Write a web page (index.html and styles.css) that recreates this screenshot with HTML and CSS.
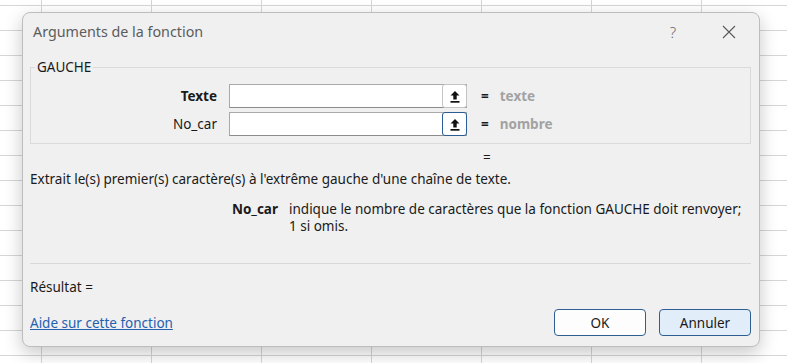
FILE: index.html
```html
<!DOCTYPE html>
<html lang="fr">
<head>
    <meta charset="UTF-8">
    <title>Arguments de la fonction</title>
    <link rel="stylesheet" href="styles.css">
</head>
<body>

<div class="dialog">
    <div class="titlebar">
        <span class="title">Arguments de la fonction</span>
        <span class="help">?</span>
        <span class="close">
            <svg width="14" height="14" viewBox="0 0 14 14"><path d="M1 1L13 13M13 1L1 13" stroke="#5a5a5a" stroke-width="1.1" fill="none"/></svg>
        </span>
    </div>

    <fieldset class="group">
        <legend>GAUCHE</legend>
        <div class="arg-row">
            <label class="arg-name bold">Texte</label>
            <div class="ref-input">
                <span class="ref-btn">
                    <svg width="12" height="13" viewBox="0 0 12 13"><path d="M6 1L1.5 5.5H4.3V9.5H7.7V5.5H10.5Z" fill="#111"/><rect x="1.5" y="11" width="9" height="1.7" fill="#111"/></svg>
                </span>
            </div>
            <span class="eq">=</span>
            <span class="arg-value">texte</span>
        </div>
        <div class="arg-row">
            <label class="arg-name">No_car</label>
            <div class="ref-input">
                <span class="ref-btn focused">
                    <svg width="12" height="13" viewBox="0 0 12 13"><path d="M6 1L1.5 5.5H4.3V9.5H7.7V5.5H10.5Z" fill="#111"/><rect x="1.5" y="11" width="9" height="1.7" fill="#111"/></svg>
                </span>
            </div>
            <span class="eq">=</span>
            <span class="arg-value">nombre</span>
        </div>
    </fieldset>

    <div class="formula-eq">=</div>
    <div class="desc">Extrait le(s) premier(s) caractère(s) à l'extrême gauche d'une chaîne de texte.</div>

    <div class="arg-help">
        <div class="help-name">No_car</div>
        <div class="help-text">
            <div>indique le nombre de caractères que la fonction GAUCHE doit renvoyer;</div>
            <div>1 si omis.</div>
        </div>
    </div>

    <div class="separator"></div>

    <div class="result">Résultat =</div>

    <div class="footer">
        <a href="#" class="help-link">Aide sur cette fonction</a>
        <div class="buttons">
            <button class="btn">OK</button>
            <button class="btn cancel">Annuler</button>
        </div>
    </div>
</div>

</body>
</html>
```

FILE: styles.css
```css
html, body {
    height: 100%;
}
body {
    margin: 0;
    overflow: hidden;
    font-family: "Noto Sans", "Open Sans", sans-serif;
    font-size: 13.5px;
    color: #1a1a1a;
    background-color: #fff;
    background-image:
        linear-gradient(to right, #d6d6d6 1px, transparent 1px),
        linear-gradient(to bottom, #d6d6d6 1px, transparent 1px);
    background-size: 110px 25px;
    background-position: 41px 5px;
}

.dialog {
    box-sizing: border-box;
    width: 738px;
    height: 335px;
    margin: 12px 0 0 22px;
    padding: 0 8px 0 7px;
    background-color: #f0f0f0;
    border: 1px solid #bdbdbd;
    border-radius: 8px;
    box-shadow: 0 6px 18px rgba(0, 0, 0, 0.22);
}

/* title bar */
.titlebar {
    display: flex;
    align-items: center;
    height: 37px;
    padding-left: 3px;
}
.title {
    flex: 1;
    font-size: 14.3px;
    color: #5c5c5c;
}
.help {
    width: 14px;
    margin-right: 42px;
    font-size: 15px;
    font-weight: 300;
    color: #6a6a6a;
    text-align: center;
}
.close {
    display: flex;
    margin-right: 15px;
}

/* argument group */
.group {
    margin: 9px 0 0 0;
    padding: 9px 0 7px 0;
    border: 1px solid #dadada;
}
.group legend {
    padding: 0 2px;
    margin-left: 4px;
    font-size: 13.5px;
    line-height: 16px;
}
.arg-row {
    display: flex;
    align-items: center;
    height: 24px;
}
.arg-row + .arg-row {
    margin-top: 4px;
}
.arg-name {
    width: 186px;
    text-align: right;
    margin-right: 12px;
}
.bold {
    font-weight: bold;
}
.ref-input {
    box-sizing: border-box;
    width: 238px;
    height: 24px;
    display: flex;
    justify-content: flex-end;
    background-color: #fff;
    border: 1px solid #a9a9a9;
    border-bottom-color: #8c8c8c;
}
.ref-btn {
    box-sizing: border-box;
    display: flex;
    align-items: center;
    justify-content: center;
    width: 25px;
    height: 24px;
    margin: -1px -1px 0 0;
    background-color: #fff;
    border: 1px solid #c4c4c4;
    border-radius: 3px;
}
.ref-btn.focused {
    border-color: #2a5d93;
}
.eq {
    margin-left: 14px;
    font-weight: bold;
}
.arg-value {
    margin-left: 11px;
    font-weight: bold;
    color: #a2a2a2;
}

/* description */
.formula-eq {
    margin: 4px 0 0 453px;
    line-height: 18px;
}
.desc {
    margin-top: 4px;
    line-height: 18px;
}
.arg-help {
    display: flex;
    margin-top: 13px;
    line-height: 17px;
}
.help-name {
    width: 248px;
    text-align: right;
    font-weight: bold;
    margin-right: 11px;
}
.help-text {
    display: flex;
    flex-direction: column;
}
.separator {
    height: 1px;
    margin-top: 28px;
    background-color: #d9d9d9;
}
.result {
    margin-top: 14px;
    line-height: 18px;
}

/* footer */
.footer {
    display: flex;
    align-items: center;
    justify-content: space-between;
    margin-top: 13px;
}
.help-link {
    color: #2461b0;
    text-decoration: underline;
}
.buttons {
    display: flex;
    gap: 13px;
}
.btn {
    box-sizing: border-box;
    width: 92px;
    height: 27px;
    font-family: "Noto Sans", "Open Sans", sans-serif;
    font-size: 13.5px;
    color: #1a1a1a;
    background-color: #fdfdfd;
    border: 1px solid #2f5f92;
    border-radius: 4px;
}
.btn.cancel {
    background-color: #e1eefa;
}
```
